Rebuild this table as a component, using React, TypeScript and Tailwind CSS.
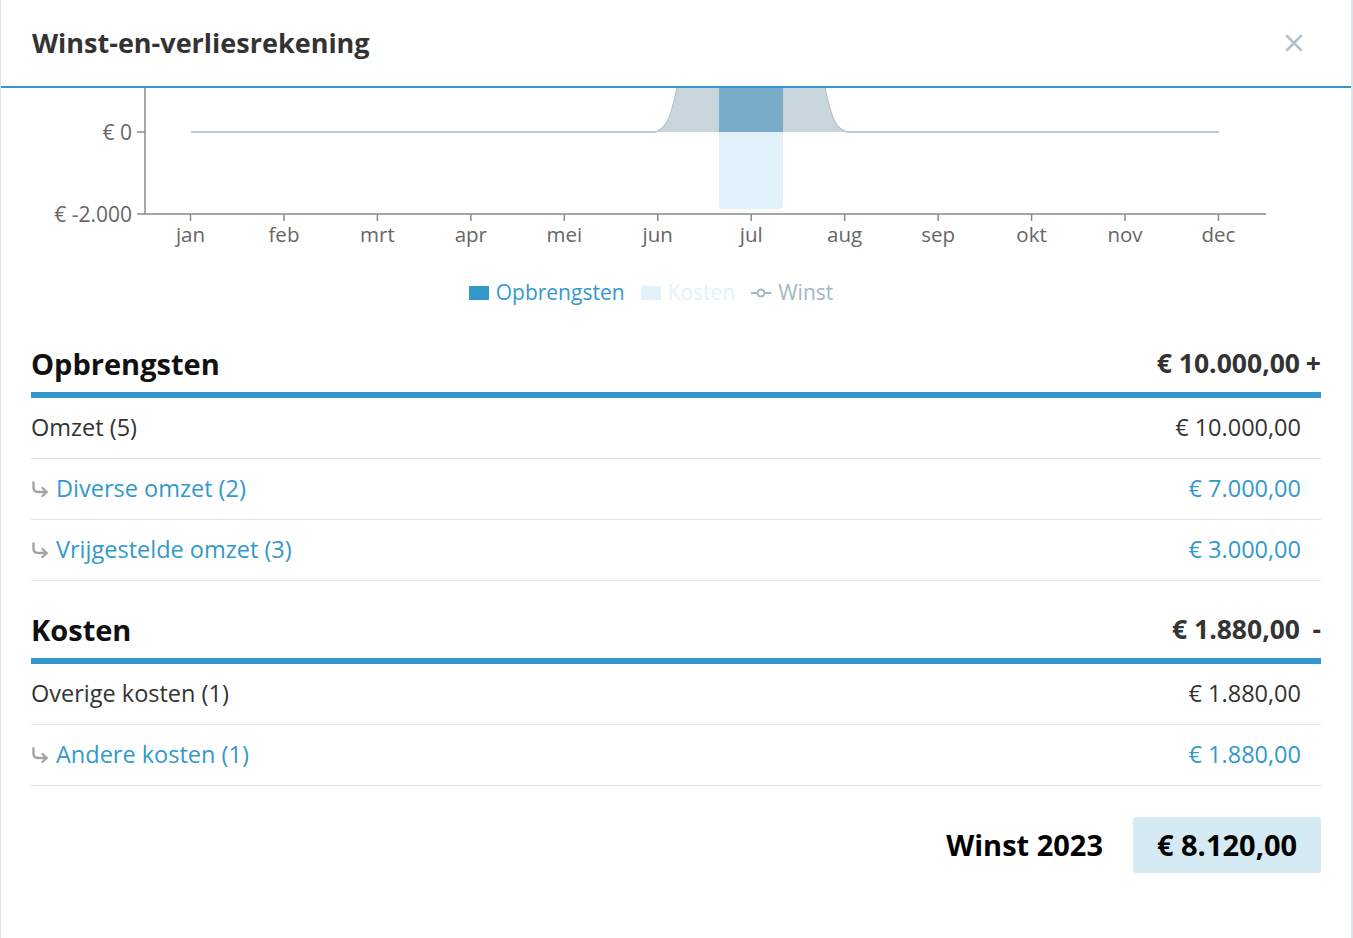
import React from 'react';

const MONTHS = ['jan', 'feb', 'mrt', 'apr', 'mei', 'jun', 'jul', 'aug', 'sep', 'okt', 'nov', 'dec'];
const monthX = (i: number) => 189.5 + i * 93.45;

const SubArrow = () => (
  <svg width="18" height="16" viewBox="0 0 18 16" className="shrink-0">
    <path d="M2.5 1.5 V6.5 Q2.5 11 7 11 H15.5" fill="none" stroke="#a4a4a4" strokeWidth="2.4" strokeLinecap="round" />
    <path d="M11.5 7 L15.5 11 L11.5 15" fill="none" stroke="#a4a4a4" strokeWidth="2.4" strokeLinecap="round" strokeLinejoin="round" />
  </svg>
);

const Chart = () => (
  <svg width="1351" height="172" viewBox="0 89 1351 172" className="block">
    {/* winst area */}
    <path d="M190 133 L652 133 C668 133 672 110 680 70 L820 70 C828 110 832 133 848 133 L1218 133" fill="none" stroke="#a9bcc8" strokeWidth="1.5" />
    <path d="M652 133 C668 133 672 110 680 70 L820 70 C828 110 832 133 848 133 Z" fill="#c9d5dc" />
    {/* opbrengsten jul */}
    <rect x="718" y="70" width="64" height="63" fill="#7aabc7" />
    {/* kosten jul */}
    <path d="M718 133 H782 V206 Q782 210 778 210 H722 Q718 210 718 206 Z" fill="#e1f1fa" />
    {/* axes */}
    <line x1="144" y1="89" x2="144" y2="215" stroke="#8a8a8a" strokeWidth="1.5" />
    <line x1="136" y1="215" x2="1265" y2="215" stroke="#8a8a8a" strokeWidth="1.5" />
    <line x1="136" y1="133" x2="144" y2="133" stroke="#8a8a8a" strokeWidth="1.5" />
    <text x="131" y="140.5" textAnchor="end" fontSize="21" fill="#666" fontFamily="'Open Sans', sans-serif">€ 0</text>
    <text x="131" y="222.5" textAnchor="end" fontSize="21" fill="#666" fontFamily="'Open Sans', sans-serif">€ -2.000</text>
    {MONTHS.map((m, i) => (
      <g key={m}>
        <line x1={monthX(i)} y1="215" x2={monthX(i)} y2="222" stroke="#8a8a8a" strokeWidth="1.5" />
        <text x={monthX(i)} y="243" textAnchor="middle" fontSize="20.5" fill="#666" fontFamily="'Open Sans', sans-serif">{m}</text>
      </g>
    ))}
  </svg>
);

type Row = { label: string; amount: string; sub?: boolean };

const Section = ({ title, total, sign, rows }: { title: string; total: string; sign: string; rows: Row[] }) => (
  <div>
    <div className="flex items-center justify-between h-[56px]">
      <span className="text-[29px] font-bold text-[#111]">{title}</span>
      <span className="flex items-center text-[26.5px] font-bold text-[#333]">
        {total}
        <span className="w-[21px] text-right">{sign}</span>
      </span>
    </div>
    <div className="h-[6px] bg-[#3399cc]" />
    {rows.map((r) => (
      <div key={r.label} className="flex items-center justify-between h-[61px] border-b border-[#dde3ea] pr-[20px] text-[23.5px]">
        {r.sub ? (
          <span className="flex items-center gap-[7px] text-[#3399cc]">
            <SubArrow />
            {r.label}
          </span>
        ) : (
          <span className="text-[#333]">{r.label}</span>
        )}
        <span className={r.sub ? 'text-[#3399cc]' : 'text-[#333]'}>{r.amount}</span>
      </div>
    ))}
  </div>
);

export default function App() {
  return (
    <div className="w-[1353px] h-[938px] bg-white border-l border-r-2 border-[#dde3ea] overflow-hidden" style={{ fontFamily: "'Open Sans', 'Liberation Sans', sans-serif" }}>
      <div className="flex items-center justify-between h-[88px] border-b-2 border-[#3399cc] pl-[31px] pr-[48px]">
        <h1 className="text-[27px] font-bold text-[#333]">Winst-en-verliesrekening</h1>
        <svg width="18" height="18" viewBox="0 0 18 18">
          <path d="M2 2 L16 16 M16 2 L2 16" stroke="#b0c2cb" strokeWidth="2.5" strokeLinecap="round" />
        </svg>
      </div>
      <Chart />
      <div className="flex justify-center pr-[50px] gap-[16px] text-[21px] mt-[17px]">
        <span className="flex items-center gap-[7px] text-[#3399cc]">
          <span className="w-[20px] h-[14px] bg-[#3399cc]" />
          Opbrengsten
        </span>
        <span className="flex items-center gap-[7px] text-[#e2f2fb]">
          <span className="w-[20px] h-[14px] bg-[#e2f2fb]" />
          Kosten
        </span>
        <span className="flex items-center gap-[7px] text-[#a3b7c3]">
          <svg width="20" height="14" viewBox="0 0 20 14">
            <line x1="0" y1="7" x2="20" y2="7" stroke="#a3b7c3" strokeWidth="2" />
            <circle cx="10" cy="7" r="3.5" fill="white" stroke="#a3b7c3" strokeWidth="2" />
          </svg>
          Winst
        </span>
      </div>
      <div className="ml-[30px] mr-[30px] mt-[27px]">
        <Section
          title="Opbrengsten"
          total="€ 10.000,00"
          sign="+"
          rows={[
            { label: 'Omzet (5)', amount: '€ 10.000,00' },
            { label: 'Diverse omzet (2)', amount: '€ 7.000,00', sub: true },
            { label: 'Vrijgestelde omzet (3)', amount: '€ 3.000,00', sub: true },
          ]}
        />
        <div className="mt-[21px]">
          <Section
            title="Kosten"
            total="€ 1.880,00"
            sign="-"
            rows={[
              { label: 'Overige kosten (1)', amount: '€ 1.880,00' },
              { label: 'Andere kosten (1)', amount: '€ 1.880,00', sub: true },
            ]}
          />
        </div>
        <div className="flex items-center justify-end gap-[30px] mt-[31px]">
          <span className="text-[29px] font-bold text-black">Winst 2023</span>
          <span className="w-[188px] h-[56px] flex items-center justify-center rounded-[3px] bg-[#d6eaf3] text-[29px] font-bold text-black">€ 8.120,00</span>
        </div>
      </div>
    </div>
  );
}
